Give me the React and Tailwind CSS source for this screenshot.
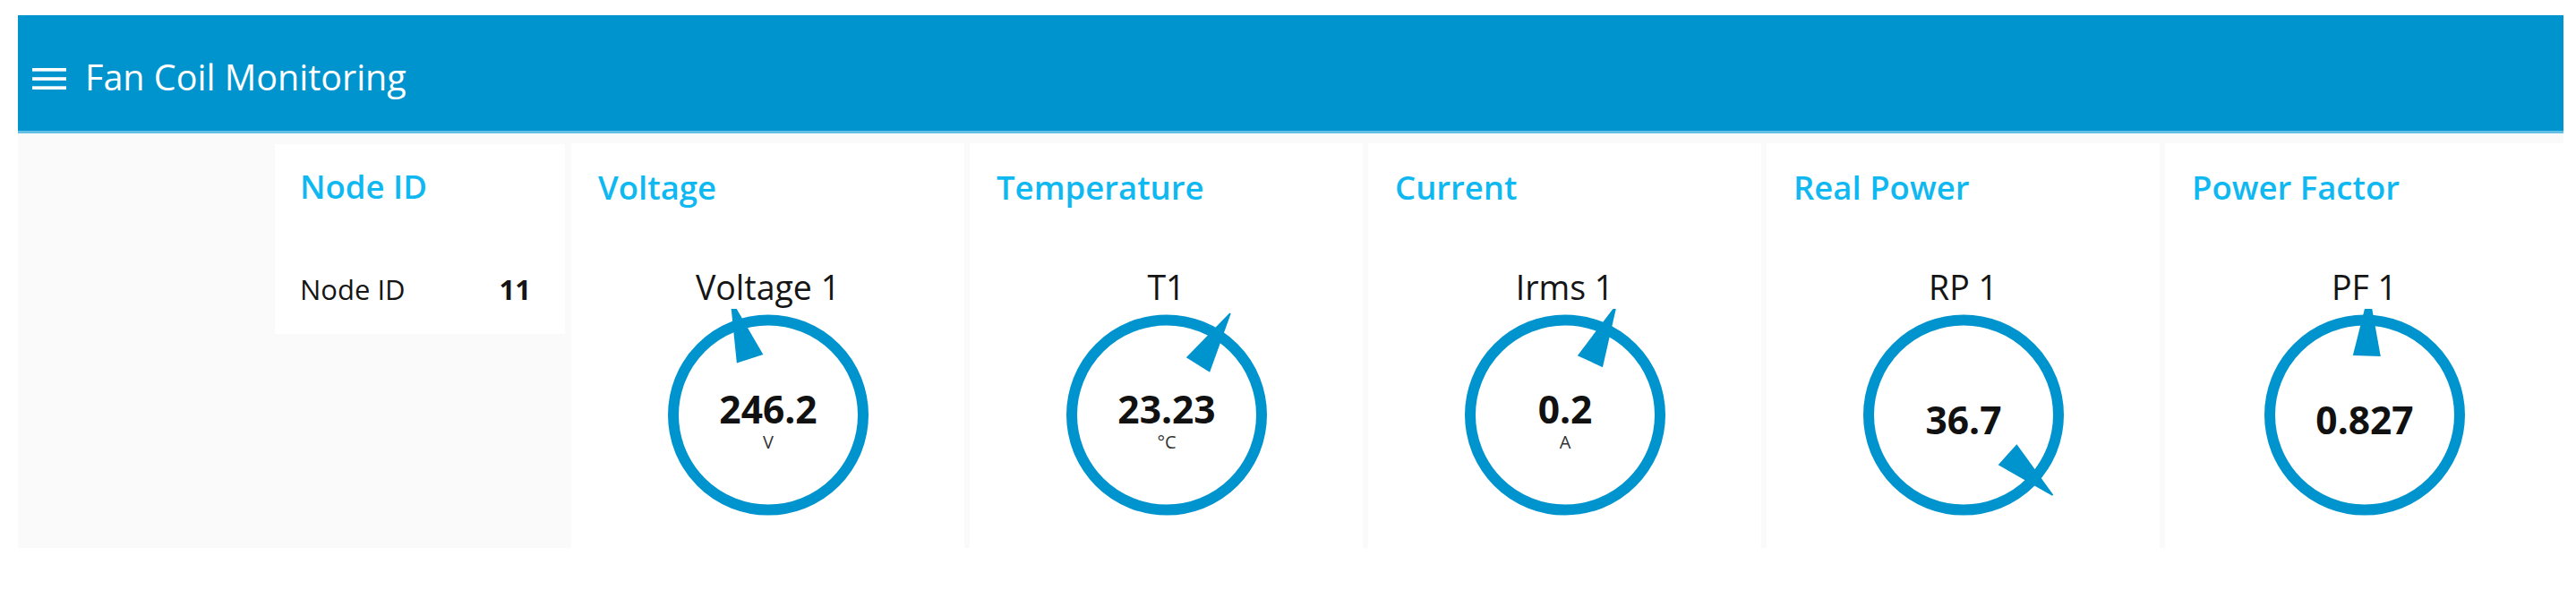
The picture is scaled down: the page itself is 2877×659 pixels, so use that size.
import React from "react";

const gauges = [
  { title: "Voltage", label: "Voltage 1", value: "246.2", unit: "V", angle: -18 },
  { title: "Temperature", label: "T1", value: "23.23", unit: "°C", angle: 32 },
  { title: "Current", label: "Irms 1", value: "0.2", unit: "A", angle: 25 },
  { title: "Real Power", label: "RP 1", value: "36.7", unit: "", angle: 132 },
  { title: "Power Factor", label: "PF 1", value: "0.827", unit: "", angle: 2 },
];

function Dial({ value, unit, angle }) {
  const pts = "-15.5,-66 15.5,-66 0.8,-134 -0.8,-134";
  return (
    <svg width="280" height="262" viewBox="-140 -118.5 280 262" className="block">
      <circle cx="0" cy="0" r="106" fill="none" stroke="#0094ce" strokeWidth="12" />
      <polygon points={pts} fill="#0094ce" transform={`rotate(${angle})`} />
      {unit ? (
        <>
          <text x="0" y="9.5" textAnchor="middle" fontFamily="'Open Sans', sans-serif" fontWeight="700" fontSize="42.5" fill="#111111">
            {value}
          </text>
          <text x="0" y="37" textAnchor="middle" fontFamily="'Open Sans', sans-serif" fontSize="20" fill="#333333">
            {unit}
          </text>
        </>
      ) : (
        <text x="0" y="21.5" textAnchor="middle" fontFamily="'Open Sans', sans-serif" fontWeight="700" fontSize="42.5" fill="#111111">
          {value}
        </text>
      )}
    </svg>
  );
}

function GaugeCard({ g, last }) {
  return (
    <section className={`${last ? "flex-1" : "w-[439px]"} h-[452px] bg-white flex flex-col`}>
      <h2 className="pl-[30px] pt-[24px] text-[36.5px] leading-[50px] font-semibold text-[#10b8f2] whitespace-nowrap">
        {g.title}
      </h2>
      <div className="mt-[66.5px] text-center text-[37.5px] leading-[40px] text-[#151515] whitespace-nowrap">
        {g.label}
      </div>
      <div className="mt-[4px] flex justify-center">
        <Dial value={g.value} unit={g.unit} angle={g.angle} />
      </div>
    </section>
  );
}

function NodeCard() {
  return (
    <section className="w-[324px] h-[212px] bg-white flex flex-col">
      <h2 className="pl-[28px] pt-[22px] text-[36.5px] leading-[50px] font-semibold text-[#10b8f2] whitespace-nowrap">
        Node ID
      </h2>
      <div className="mt-[70px] pl-[28px] pr-[38px] flex justify-between items-center text-[31px] leading-[40px] text-[#151515]">
        <span>Node ID</span>
        <span className="font-bold">11</span>
      </div>
    </section>
  );
}

export default function App() {
  return (
    <div className="w-[2877px] h-[659px] bg-white pt-[17px] pl-[20px] pr-[14px] font-['Open_Sans',sans-serif]">
      <header className="h-[132px] bg-[#0094ce] border-b-[3px] border-[#62bfe5] flex items-start pl-[16px]">
        <svg width="38" height="24" viewBox="0 0 38 24" className="mt-[59px] shrink-0">
          <rect x="0" y="0" width="38" height="3.7" fill="#ffffff" />
          <rect x="0" y="10.2" width="38" height="3.7" fill="#ffffff" />
          <rect x="0" y="20.3" width="38" height="3.7" fill="#ffffff" />
        </svg>
        <span className="ml-[21px] mt-[50px] text-white text-[39.5px] leading-[39.5px] whitespace-nowrap">
          Fan Coil Monitoring
        </span>
      </header>
      <main className="h-[463px] bg-[#fafafa] flex items-start pt-[11px] pl-[287px] gap-[7px]">
        <div className="mt-[1px]">
          <NodeCard />
        </div>
        <div className="flex-1 flex gap-[6px]">
          {gauges.map((g, i) => (
            <GaugeCard key={g.title} g={g} last={i === gauges.length - 1} />
          ))}
        </div>
      </main>
    </div>
  );
}
